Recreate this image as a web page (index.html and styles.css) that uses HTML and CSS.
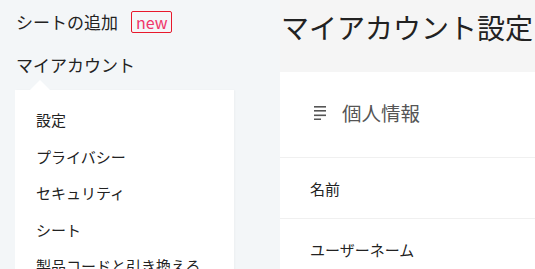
FILE: index.html
```html
<!DOCTYPE html>
<html lang="ja">
<head>
  <meta charset="UTF-8">
  <title>マイアカウント設定</title>
  <meta name="viewport" content="width=device-width, initial-scale=1.0" />
  <link rel="stylesheet" href="styles.css">
</head>
<body>

<div class="sidebar">
  <div class="add-sheet">シートの追加 <span class="badge">new</span></div>
  <div class="account">マイアカウント</div>
  <ul class="dropdown">
    <li>設定</li>
    <li>プライバシー</li>
    <li>セキュリティ</li>
    <li>シート</li>
    <li>製品コードと引き換える</li>
  </ul>
</div>

<div class="main">
  <h1>マイアカウント設定</h1>
  <div class="card">
    <div class="card-head">
      <svg class="icon" width="13" height="14" viewBox="0 0 13 14">
        <rect x="0" y="0" width="12" height="1.6" fill="#555"/>
        <rect x="0" y="4" width="12" height="1.6" fill="#555"/>
        <rect x="0" y="8.5" width="12" height="1.6" fill="#555"/>
        <rect x="0" y="12.5" width="7" height="1.6" fill="#555"/>
      </svg>
      <span>個人情報</span>
    </div>
    <div class="row">名前</div>
    <div class="row">ユーザーネーム</div>
  </div>
</div>

</body>
</html>
```

FILE: styles.css
```css
* {
  box-sizing: border-box;
  font-family: "Noto Sans CJK JP", "Noto Sans", sans-serif;
}

body {
  margin: 0;
  padding: 0;
  height: 269px;
  overflow: hidden;
  display: flex;
  background-color: #f3f6f8;
  color: #222;
}

.sidebar {
  width: 280px;
  flex-shrink: 0;
  padding-left: 15px;
  padding-top: 10px;
}

.add-sheet {
  font-size: 17px;
  line-height: 24px;
  display: flex;
  align-items: center;
  gap: 13px;
  padding-left: 1px;
}

.badge {
  border: 1px solid #e8192c;
  border-radius: 2px;
  color: #f0356a;
  font-size: 16px;
  line-height: 20px;
  padding: 0 3px 0 4px;
}

.account {
  font-size: 17px;
  line-height: 24px;
  margin-top: 19px;
  padding-left: 1px;
}

.dropdown {
  position: relative;
  list-style: none;
  margin: 13px 0 0;
  width: 219px;
  background: #fff;
  padding: 12px 0 0 21px;
  box-shadow: 1px 0 2px rgba(0,0,0,0.03);
}

.dropdown::before {
  content: "";
  position: absolute;
  top: -10px;
  left: 15px;
  border-left: 10px solid transparent;
  border-right: 10px solid transparent;
  border-bottom: 10px solid #fff;
}

.dropdown li {
  font-size: 15px;
  line-height: 36.5px;
  white-space: nowrap;
}

.main {
  flex: 1;
  background-color: #f5f5f5;
}

h1 {
  margin: 9px 0 0;
  font-size: 28px;
  font-weight: 400;
  line-height: 36px;
  color: #222;
  white-space: nowrap;
  padding-left: 1px;
  height: 63px;
}

.card {
  background: #fff;
  height: 300px;
}

.card-head {
  height: 86px;
  border-bottom: 1px solid #f0f0f0;
  display: flex;
  align-items: center;
  padding-left: 34px;
  padding-bottom: 4px;
  gap: 15px;
  font-size: 19.5px;
  color: #555;
}

.row {
  height: 61px;
  border-bottom: 1px solid #f0f0f0;
  display: flex;
  align-items: center;
  padding-left: 30px;
  font-size: 15px;
  color: #222;
}
```
